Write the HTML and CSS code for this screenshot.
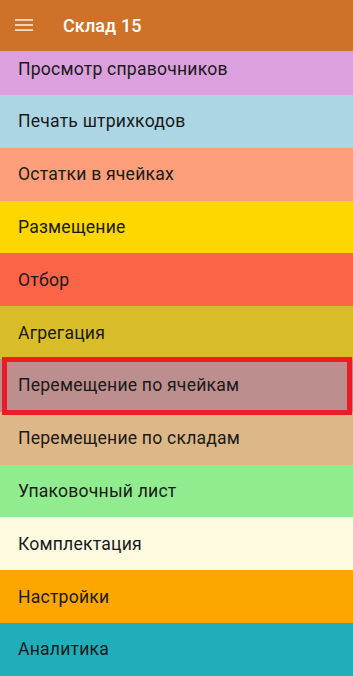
FILE: index.html
```html
<!DOCTYPE html>
<html lang="ru">
<head>
<meta charset="utf-8">
<title>Склад 15</title>
<link rel="stylesheet" href="styles.css">
</head>
<body>
<div class="app">
  <header class="bar">
    <svg class="menu" width="18" height="12" viewBox="0 0 18 12" aria-hidden="true">
      <rect x="0" y="0" width="18" height="1.8" fill="#f6dcc4"/>
      <rect x="0" y="5.1" width="18" height="1.8" fill="#f6dcc4"/>
      <rect x="0" y="10.2" width="18" height="1.8" fill="#f6dcc4"/>
    </svg>
    <div class="title">Склад 15</div>
  </header>
  <div class="viewport">
    <ul class="list">
      <li class="row c-plum">Просмотр справочников</li>
      <li class="row c-blue">Печать штрихкодов</li>
      <li class="row c-salmon">Остатки в ячейках</li>
      <li class="row c-gold">Размещение</li>
      <li class="row c-tomato">Отбор</li>
      <li class="row c-agr">Агрегация</li>
      <li class="row c-rosy selected">Перемещение по ячейкам</li>
      <li class="row c-burly">Перемещение по складам</li>
      <li class="row c-green">Упаковочный лист</li>
      <li class="row c-silk">Комплектация</li>
      <li class="row c-orange">Настройки</li>
      <li class="row c-teal">Аналитика</li>
    </ul>
  </div>
</div>
</body>
</html>
```

FILE: styles.css
```css
html, body {
  margin: 0;
  padding: 0;
}
body {
  font-family: Roboto, "Noto Sans", "Liberation Sans", sans-serif;
  background: #ffffff;
}
.app {
  width: 353px;
  height: 676px;
  display: flex;
  flex-direction: column;
  overflow: hidden;
}
.bar {
  position: relative;
  z-index: 2;
  height: 51px;
  flex: 0 0 51px;
  background: #cf7229;
  display: flex;
  align-items: center;
  padding-left: 15px;
  box-sizing: border-box;
}
.menu {
  display: block;
  margin-top: -1px;
}
.title {
  margin-left: 30px;
  color: #ffffff;
  font-size: 18px;
  font-weight: 500;
  letter-spacing: 0.1px;
  margin-top: -1px;
}
.viewport {
  flex: 1 1 auto;
  overflow: hidden;
}
.list {
  list-style: none;
  margin: -8.8px 0 0 0;
  padding: 0;
}
.row {
  height: 52.8px;
  display: flex;
  align-items: center;
  padding-left: 18px;
  box-sizing: border-box;
  font-size: 17.6px;
  font-weight: 400;
  color: #1a1a1a;
  letter-spacing: 0.2px;
}
.selected {
  position: relative;
}
.selected::after {
  content: "";
  position: absolute;
  left: 2px;
  right: 1px;
  top: -2px;
  bottom: -3px;
  border: 5.5px solid #ec1c27;
  pointer-events: none;
}
.c-plum { background: #dba0dd; }
.c-blue { background: #add6e4; }
.c-salmon { background: #fd9f7a; }
.c-gold { background: #fed700; }
.c-tomato { background: #fd6448; }
.c-agr { background: #d9bd28; }
.c-rosy { background: #bc8e8e; }
.c-burly { background: #ddb787; }
.c-green { background: #91ec90; }
.c-silk { background: #fefbe0; }
.c-orange { background: #fea600; }
.c-teal { background: #21aebb; }
```
